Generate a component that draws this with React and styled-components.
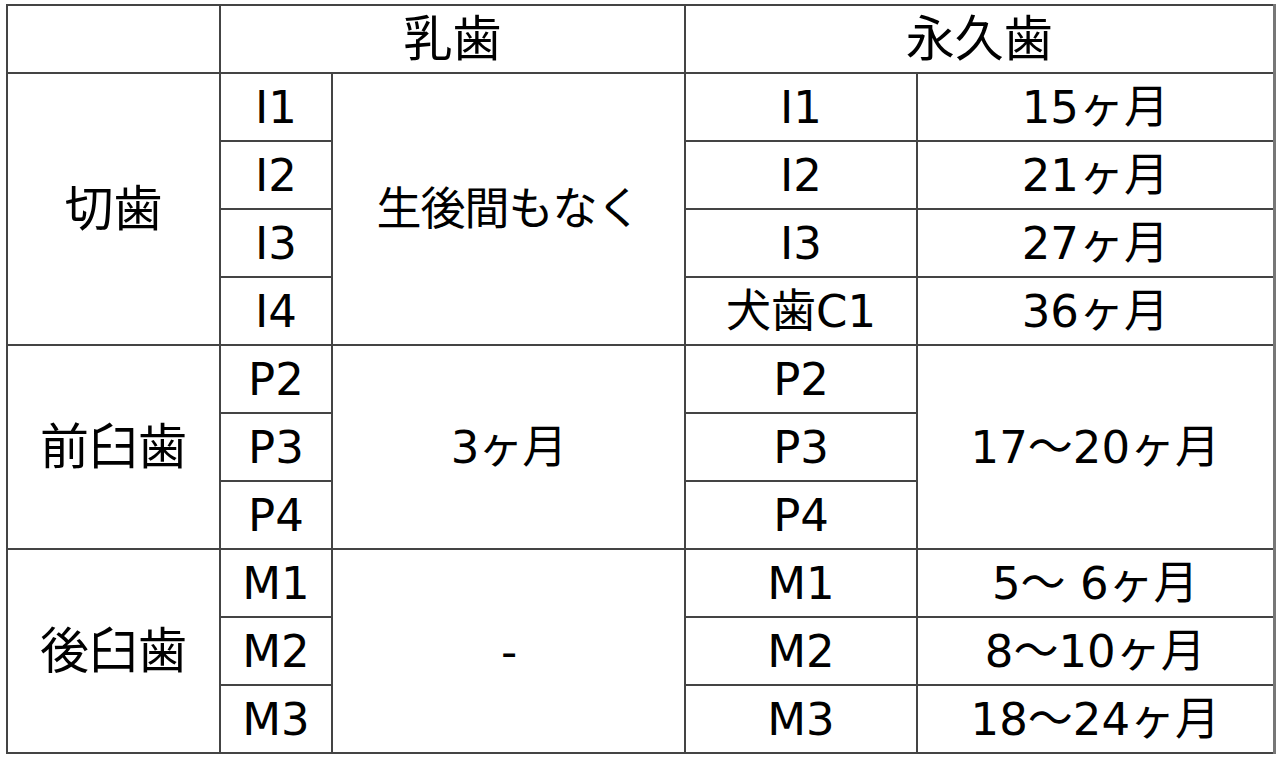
import React from "react";
import styled, { createGlobalStyle } from "styled-components";

const GlobalStyle = createGlobalStyle`
  html, body {
    margin: 0;
    background: #ffffff;
  }
  #root {
    padding: 4px 6px;
  }
`;

const Table = styled.table`
  width: 1267px;
  table-layout: fixed;
  border-collapse: collapse;
  font-family: "DejaVu Sans", "Noto Sans CJK JP", sans-serif;
  font-size: 45px;
  color: #000;
  border: 2px solid #4a4a4a;
  border-right: 3px solid #777;
`;

const Cell = styled.td`
  height: 66px;
  padding: 0;
  text-align: center;
  vertical-align: middle;
  border: 2px solid #444;
  line-height: 1;
  white-space: pre;
  font-size: ${(p) => (p.$big ? "49px" : "45px")};
  letter-spacing: ${(p) => (p.$tight ? "-1px" : "0")};
`;

const HeadCell = styled(Cell).attrs({ as: "th" })`
  font-weight: normal;
`;

const widths = [213, 112, 353, 232, 357];

const groups = [
  {
    name: "切歯",
    baby: "生後間もなく",
    rows: [
      ["I1", "I1", "15ヶ月"],
      ["I2", "I2", "21ヶ月"],
      ["I3", "I3", "27ヶ月"],
      ["I4", "犬歯C1", "36ヶ月"],
    ],
  },
  {
    name: "前臼歯",
    baby: "3ヶ月",
    merged: "17～20ヶ月",
    rows: [
      ["P2", "P2"],
      ["P3", "P3"],
      ["P4", "P4"],
    ],
  },
  {
    name: "後臼歯",
    baby: "-",
    rows: [
      ["M1", "M1", "5～ 6ヶ月"],
      ["M2", "M2", "8～10ヶ月"],
      ["M3", "M3", "18～24ヶ月"],
    ],
  },
];

export default function App() {
  return (
    <>
      <GlobalStyle />
      <Table>
        <colgroup>
          {widths.map((w, i) => (
            <col key={i} style={{ width: w }} />
          ))}
        </colgroup>
        <thead>
          <tr>
            <HeadCell />
            <HeadCell colSpan={2} $big>乳歯</HeadCell>
            <HeadCell colSpan={2} $big>永久歯</HeadCell>
          </tr>
        </thead>
        <tbody>
          {groups.map((g) =>
            g.rows.map((r, i) => (
              <tr key={g.name + i}>
                {i === 0 && (
                  <Cell rowSpan={g.rows.length} $big>
                    {g.name}
                  </Cell>
                )}
                <Cell>{r[0]}</Cell>
                {i === 0 && (
                  <Cell rowSpan={g.rows.length} $tight>
                    {g.baby}
                  </Cell>
                )}
                <Cell>{r[1]}</Cell>
                {g.merged
                  ? i === 0 && <Cell rowSpan={g.rows.length}>{g.merged}</Cell>
                  : <Cell>{r[2]}</Cell>}
              </tr>
            ))
          )}
        </tbody>
      </Table>
    </>
  );
}
